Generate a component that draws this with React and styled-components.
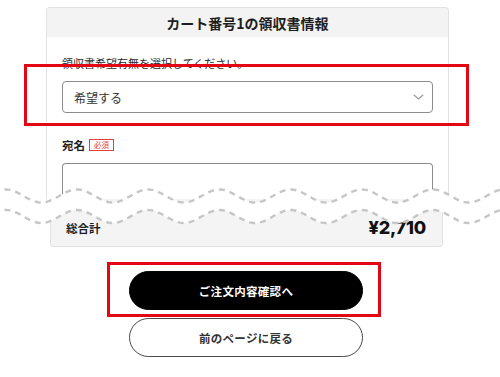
import React from 'react'
import styled, { createGlobalStyle } from 'styled-components'

const GlobalStyle = createGlobalStyle`
  html, body {
    margin: 0;
    padding: 0;
    background: #fff;
  }
  body {
    font-family: "Noto Sans CJK JP", "Noto Sans", sans-serif;
    color: #222;
  }
`

const Page = styled.div`
  width: 500px;
  height: 377px;
  padding-top: 7px;
  box-sizing: border-box;
  overflow: hidden;
`

const Cut = styled.div`
  position: relative;
`

// top half of the receipt card, cut off under the wave
const Card = styled.section`
  margin-left: 46px;
  width: 403px;
  height: 192px;
  box-sizing: border-box;
  border: 1px solid #e2e2e2;
  border-bottom: none;
  border-radius: 4px 4px 0 0;
`

const CardHeader = styled.h2`
  margin: 0;
  height: 29px;
  border-radius: 3px 3px 0 0;
  background: #f3f3f3;
  display: flex;
  align-items: center;
  justify-content: center;
  font-size: 14px;
  font-weight: 700;
  color: #1e1e1e;
`

const CardBody = styled.div`
  padding: 18px 15px 0;
`

const Label = styled.div`
  display: flex;
  align-items: center;
  gap: 4px;
  font-size: ${p => (p.$bold ? '11.5px' : '11px')};
  font-weight: ${p => (p.$bold ? 700 : 400)};
  line-height: 16px;
  color: ${p => (p.$bold ? '#1e1e1e' : '#2a2a2a')};
  margin-top: ${p => p.$top || 0}px;
  margin-bottom: ${p => p.$gap}px;
`

const Required = styled.span`
  display: inline-flex;
  align-items: center;
  justify-content: center;
  width: 25px;
  height: 12px;
  box-sizing: border-box;
  border: 1px solid #e2403f;
  color: #e2403f;
  font-size: 7.5px;
  font-weight: 400;
  line-height: 1;
`

const Field = styled.div`
  position: relative;
`

// red annotation frame drawn around the marked element
const Mark = styled.div`
  position: absolute;
  top: ${p => p.$t}px;
  right: ${p => p.$r}px;
  bottom: ${p => p.$b}px;
  left: ${p => p.$l}px;
  border: 3px solid #e30613;
  pointer-events: none;
  z-index: 3;
`

const Select = styled.div`
  height: 32px;
  box-sizing: border-box;
  border: 1px solid #8c8c8c;
  border-radius: 4px;
  display: flex;
  align-items: center;
  justify-content: space-between;
  padding: 0 8px 0 11px;
  font-size: 12px;
  color: #333;
`

const Input = styled.div`
  height: 36px;
  box-sizing: border-box;
  border: 1px solid #8c8c8c;
  border-bottom: none;
  border-radius: 4px 4px 0 0;
`

const Totals = styled.div`
  margin-left: 50px;
  width: 393px;
  height: 48px;
  box-sizing: border-box;
  border: 1px solid #e2e2e2;
  border-top: none;
  border-radius: 0 0 4px 4px;
  background: #f4f4f4;
  display: flex;
  align-items: center;
  justify-content: space-between;
  padding: 10px 16px 0 15px;
`

const TotalLabel = styled.span`
  font-size: 11.5px;
  font-weight: 700;
  color: #1e1e1e;
`

const TotalPrice = styled.span`
  font-family: Inter, "Noto Sans", sans-serif;
  font-size: 18px;
  font-weight: 800;
  letter-spacing: -0.2px;
  color: #111;
`

const Wave = styled.svg`
  position: absolute;
  left: 0;
  top: 172px;
  width: 500px;
  height: 52px;
  z-index: 2;
`

const Actions = styled.div`
  margin: 24px 0 0 129px;
  width: 234px;
  display: flex;
  flex-direction: column;
  gap: 8px;
`

const Button = styled.button`
  width: 100%;
  height: 39px;
  border-radius: 20px;
  border: 1px solid ${p => (p.$primary ? '#000' : '#4a4a4a')};
  background: ${p => (p.$primary ? '#000' : '#fff')};
  color: ${p => (p.$primary ? '#fff' : '#333')};
  font-family: "Noto Sans CJK JP", sans-serif;
  font-size: 11.5px;
  font-weight: 700;
  letter-spacing: 0.3px;
  cursor: pointer;
  padding: 0;
`

function wave(cy, from = -6, to = 506) {
  const pts = []
  for (let x = from; x <= to; x += 2) {
    const y = cy - 6.5 * Math.cos((2 * Math.PI * (x - 77)) / 71.2)
    pts.push([x, y.toFixed(2)])
  }
  return pts
}

const Chevron = () => (
  <svg width="11" height="6" viewBox="0 0 11 6" fill="none">
    <path d="M1 1l4.5 4 4.5-4" stroke="#9a9a9a" strokeWidth="1.1" strokeLinecap="round" strokeLinejoin="round" />
  </svg>
)

const TornEdge = () => {
  const top = wave(17)
  const bottom = wave(37.5)
  const line = pts => 'M' + pts.map(p => p.join(',')).join('L')
  const fill = line(top) + 'L' + bottom.slice().reverse().map(p => p.join(',')).join('L') + 'Z'
  return (
    <Wave viewBox="0 0 500 52">
      <path d={fill} fill="#fff" />
      <path d={line(top)} fill="none" stroke="#c6c6c6" strokeWidth="2.4" strokeDasharray="6 5" />
      <path d={line(bottom)} fill="none" stroke="#c6c6c6" strokeWidth="2.4" strokeDasharray="6 5" />
    </Wave>
  )
}

export default function App() {
  return (
    <Page>
      <GlobalStyle />
      <Cut>
        <Card>
          <CardHeader>カート番号1の領収書情報</CardHeader>
          <CardBody>
            <Label $gap={10}>領収書希望有無を選択してください。</Label>
            <Field>
              <Select>
                希望する
                <Chevron />
              </Select>
              <Mark $t={-17} $r={-36} $b={-13} $l={-38} />
            </Field>
            <Label $bold $top={24} $gap={10}>
              宛名<Required>必須</Required>
            </Label>
            <Input />
          </CardBody>
        </Card>
        <Totals>
          <TotalLabel>総合計</TotalLabel>
          <TotalPrice>¥2,710</TotalPrice>
        </Totals>
        <TornEdge />
      </Cut>
      <Actions>
        <Field>
          <Button $primary>ご注文内容確認へ</Button>
          <Mark $t={-9} $r={-18} $b={-7} $l={-22} />
        </Field>
        <Button>前のページに戻る</Button>
      </Actions>
    </Page>
  )
}
